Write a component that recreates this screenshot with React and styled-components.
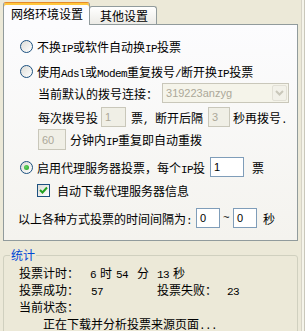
import styled, { createGlobalStyle, css } from 'styled-components';

const GlobalStyle = createGlobalStyle`
	html, body {
		margin: 0;
		padding: 0;
		background: #ece9d8;
	}
	body {
		font-family: 'Noto Sans CJK SC', 'Liberation Sans', sans-serif;
		font-size: 12px;
		color: #000;
	}
`;

const App = () => {
	return (
		<Page>
			<GlobalStyle />
			<TabStrip>
				<Tab $active>网络环境设置</Tab>
				<Tab>其他设置</Tab>
			</TabStrip>
			<Panel>
				<Row $mt={11} $indent={16}>
					<Radio />
					<span>
						不换<L>IP</L>或软件自动换<L>IP</L>投票
					</span>
				</Row>
				<Row $mt={5} $indent={16}>
					<Radio />
					<span>
						使用<L>Adsl</L>或<L>Modem</L>重复拨号<L>/</L>断开换<L>IP</L>投票
					</span>
				</Row>
				<Row $mt={2} $indent={34}>
					<span>当前默认的拨号连接：</span>
					<Combo>
						<span>319223anzyg</span>
						<ComboButton>
							<svg width='9' height='6' viewBox='0 0 9 6'>
								<path d='M1 1 L4.5 4.5 L8 1' fill='none' stroke='#c9c7ba' strokeWidth='2' />
							</svg>
						</ComboButton>
					</Combo>
				</Row>
				<Row $mt={4} $indent={34}>
					<span>每次拨号投</span>
					<Field $w={25} $ml={3} $disabled>1</Field>
					<Gap $w={5} />
					<span>
						票<L>, </L>断开后隔
					</span>
					<Field $w={22} $ml={5} $disabled>3</Field>
					<Gap $w={3} />
					<span>
						秒再拨号<L>.</L>
					</span>
				</Row>
				<Row $mt={2} $indent={34} $h={21}>
					<Field $w={28} $h={21} $disabled>60</Field>
					<Gap $w={4} />
					<span>
						分钟内<L>IP</L>重复即自动重拨
					</span>
				</Row>
				<Row $mt={7} $indent={16}>
					<Radio $checked />
					<span>
						启用代理服务器投票，每个<L>IP</L>投
					</span>
					<Field $w={34} $ml={5}>1</Field>
					<Gap $w={8} />
					<span>票</span>
				</Row>
				<Row $mt={3} $indent={33}>
					<Check>
						<svg width='9' height='9' viewBox='0 0 9 9'>
							<path d='M1 4 L3.5 6.5 L8 1.5' fill='none' stroke='#21a121' strokeWidth='2' />
						</svg>
					</Check>
					<span>自动下载代理服务器信息</span>
				</Row>
				<Row $mt={8} $indent={14}>
					<span>
						以上各种方式投票的时间间隔为<L>:</L>
					</span>
					<Field $w={24} $ml={4}>0</Field>
					<Gap $w={3} />
					<L>~</L>
					<Field $w={24} $ml={4}>0</Field>
					<Gap $w={6} />
					<span>秒</span>
				</Row>
			</Panel>
			<GroupBox>
				<Legend>统计</Legend>
				<Stats>
					<StatRow>
						<Cell $w={71}>投票计时：</Cell>
						<Cell $w={10}>
							<L>6</L>
						</Cell>
						<Cell $w={16}>时</Cell>
						<Cell $w={21}>
							<L>54</L>
						</Cell>
						<Cell $w={20}>分</Cell>
						<Cell $w={16}>
							<L>13</L>
						</Cell>
						<Cell>秒</Cell>
					</StatRow>
					<StatRow>
						<Cell $w={72}>投票成功：</Cell>
						<Cell $w={66}>
							<L>57</L>
						</Cell>
						<Cell $w={70}>投票失败：</Cell>
						<Cell>
							<L>23</L>
						</Cell>
					</StatRow>
					<StatRow>
						<Cell>当前状态：</Cell>
					</StatRow>
					<StatRow $indent={24}>
						<Cell>
							正在下载并分析投票来源页面<L>...</L>
						</Cell>
					</StatRow>
				</Stats>
			</GroupBox>
		</Page>
	);
};

export default App;

const Page = styled.div`
	width: 305px;
	height: 331px;
	overflow: hidden;
	box-sizing: border-box;
	padding: 2px 0 0 3px;
	box-shadow: inset -1px 0 #c9c7ba, inset -3px 0 #f5f4ea, inset -4px 0 #d6d3c6,
		inset -6px 0 #ece9d8;
`;

const L = styled.span`
	font-family: 'Liberation Mono', monospace;
	font-size: 11px;
	letter-spacing: -0.6px;
`;

const TabStrip = styled.div`
	display: flex;
	align-items: flex-end;
	height: 22px;
`;

const Tab = styled.div`
	box-sizing: border-box;
	border: 1px solid #919b9c;
	border-bottom: none;
	border-radius: 3px 3px 0 0;
	line-height: 16px;
	white-space: nowrap;
	${(p) =>
		p.$active
			? css`
					position: relative;
					z-index: 2;
					width: 87px;
					height: 23px;
					margin-bottom: -1px;
					padding: 3px 0 0 7px;
					background: #fcfcfe;
					border-top: 1px solid #e68b2c;
					box-shadow: inset 0 2px 0 #ffc73c;
			  `
			: css`
					width: 68px;
					height: 18px;
					margin-left: -1px;
					padding: 1px 0 0 10px;
					background: linear-gradient(#ffffff, #ecebe6);
			  `}
`;

const Panel = styled.div`
	box-sizing: border-box;
	width: 295px;
	height: 217px;
	border: 1px solid #919b9c;
	background: linear-gradient(#fcfcfe, #f4f3ee);
	overflow: hidden;
`;

const Row = styled.div`
	display: flex;
	align-items: center;
	height: ${(p) => p.$h || 20}px;
	margin-top: ${(p) => p.$mt || 0}px;
	padding-left: ${(p) => p.$indent || 0}px;
	white-space: nowrap;
`;

const Gap = styled.span`
	display: inline-block;
	width: ${(p) => p.$w}px;
`;

const Radio = styled.span`
	position: relative;
	box-sizing: border-box;
	flex: none;
	width: 13px;
	height: 13px;
	margin-right: 4px;
	border: 1px solid #1c5180;
	border-radius: 50%;
	background: linear-gradient(135deg, #dcdcd7, #ffffff);
	${(p) =>
		p.$checked &&
		css`
			&::after {
				content: '';
				position: absolute;
				left: 3px;
				top: 3px;
				width: 5px;
				height: 5px;
				border-radius: 50%;
				background: radial-gradient(circle at 40% 40%, #63d263, #21a121);
			}
		`}
`;

const Check = styled.span`
	box-sizing: border-box;
	flex: none;
	display: flex;
	align-items: center;
	justify-content: center;
	width: 13px;
	height: 13px;
	margin-right: 7px;
	border: 1px solid #1c5180;
	background: linear-gradient(135deg, #dcdcd7, #ffffff);
`;

const Field = styled.div`
	box-sizing: border-box;
	flex: none;
	display: flex;
	align-items: center;
	width: ${(p) => p.$w}px;
	height: ${(p) => p.$h || 20}px;
	margin-left: ${(p) => p.$ml || 0}px;
	padding-left: 3px;
	border: 1px solid ${(p) => (p.$disabled ? '#c9c7ba' : '#7f9db9')};
	background: ${(p) => (p.$disabled ? '#f0efe6' : '#ffffff')};
	color: ${(p) => (p.$disabled ? '#aca899' : '#000000')};
	font-family: 'Liberation Sans', sans-serif;
	font-size: 11px;
`;

const Combo = styled.div`
	box-sizing: border-box;
	display: flex;
	align-items: center;
	justify-content: space-between;
	width: 127px;
	height: 20px;
	margin-left: 4px;
	padding: 1px 1px 1px 3px;
	border: 1px solid #c9c7ba;
	background: #f5f4ea;
	color: #aca899;
	font-family: 'Liberation Sans', sans-serif;
	font-size: 11px;
`;

const ComboButton = styled.span`
	box-sizing: border-box;
	display: flex;
	align-items: center;
	justify-content: center;
	width: 15px;
	height: 16px;
	border: 1px solid #e2e0d6;
	border-radius: 2px;
	background: #f2f1e9;
`;

const GroupBox = styled.fieldset`
	box-sizing: border-box;
	width: 295px;
	height: 90px;
	min-width: 0;
	margin: 8px 0 0;
	padding: 0;
	border: 1px solid #d0d0bf;
	border-radius: 3px;
`;

const Legend = styled.legend`
	margin-left: 6px;
	padding: 0 1px;
	color: #0046d5;
	font-size: 12px;
	line-height: 12px;
`;

const Stats = styled.div`
	padding: 3px 0 0 15px;
`;

const StatRow = styled.div`
	display: flex;
	align-items: center;
	height: 17px;
	padding-left: ${(p) => p.$indent || 0}px;
	white-space: nowrap;
`;

const Cell = styled.span`
	flex: none;
	${(p) => p.$w && `width: ${p.$w}px;`}
`;
